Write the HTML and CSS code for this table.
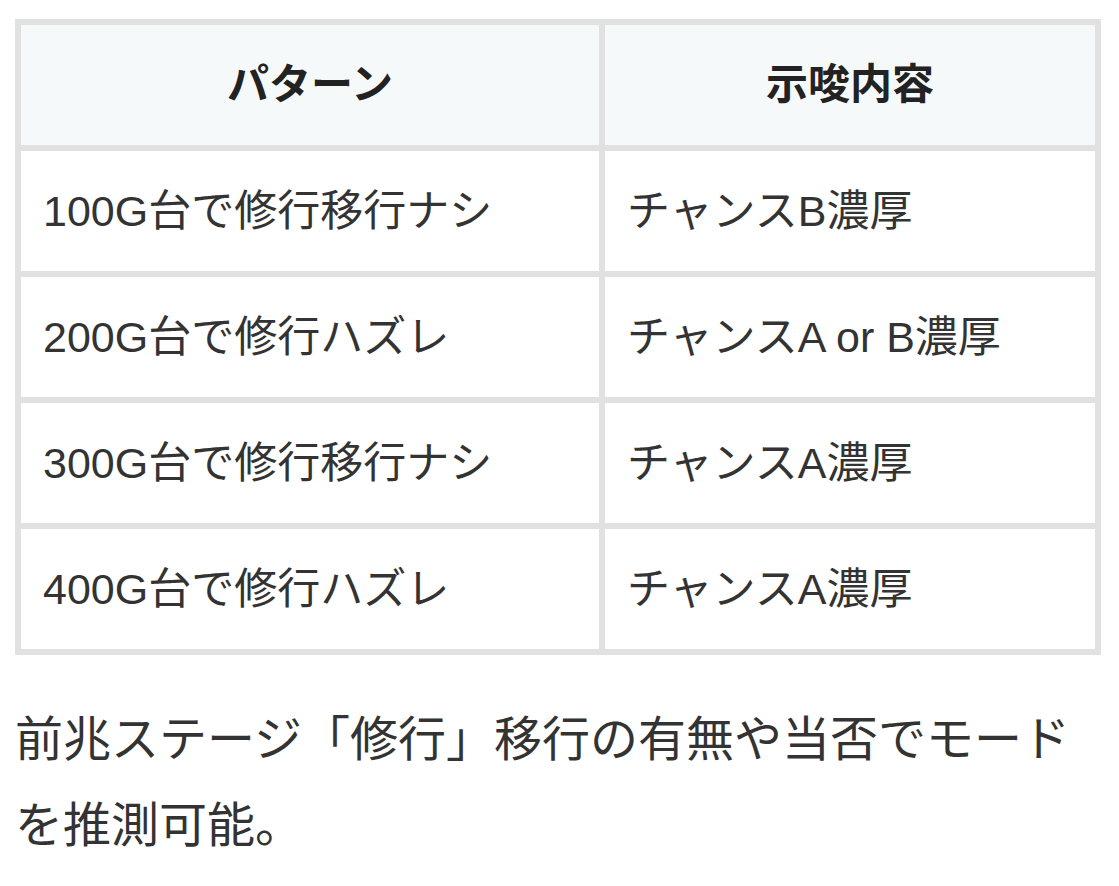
FILE: index.html
```html
<!DOCTYPE html>
<html lang="ja">
<head>
<meta charset="utf-8">
<title>修行 示唆</title>
<link rel="stylesheet" href="styles.css">
</head>
<body>
<main class="page">
  <table class="hint-table">
    <colgroup>
      <col class="col-pattern">
      <col class="col-hint">
    </colgroup>
    <thead>
      <tr>
        <th>パターン</th>
        <th>示唆内容</th>
      </tr>
    </thead>
    <tbody>
      <tr>
        <td>100G台で修行移行ナシ</td>
        <td>チャンスB濃厚</td>
      </tr>
      <tr>
        <td>200G台で修行ハズレ</td>
        <td>チャンスA or B濃厚</td>
      </tr>
      <tr>
        <td>300G台で修行移行ナシ</td>
        <td>チャンスA濃厚</td>
      </tr>
      <tr>
        <td>400G台で修行ハズレ</td>
        <td>チャンスA濃厚</td>
      </tr>
    </tbody>
  </table>
  <p class="note">前兆ステージ「修行」移行の有無や当否でモードを推測可能。</p>
</main>
</body>
</html>
```

FILE: styles.css
```css
html, body {
  margin: 0;
  padding: 0;
  background: #ffffff;
}

body {
  font-family: "Liberation Sans", "Noto Sans CJK JP", sans-serif;
  color: #333333;
}

.page {
  padding: 19px 18px 0 15px;
}

.hint-table {
  width: 1086px;
  table-layout: fixed;
  border-collapse: separate;
  border-spacing: 0;
  border-left: 6px solid #e1e1e1;
  border-top: 6px solid #e1e1e1;
}

.col-pattern {
  width: 584px;
}

.col-hint {
  width: 496px;
}

.hint-table th,
.hint-table td {
  border-right: 6px solid #e1e1e1;
  border-bottom: 6px solid #e1e1e1;
  font-size: 42px;
  line-height: 60px;
  padding: 30px 21px;
  white-space: nowrap;
}

.hint-table th {
  background: #f6f9fa;
  font-weight: bold;
  text-align: center;
  color: #222222;
}

.hint-table td {
  text-align: left;
  font-weight: normal;
  font-size: 43px;
  padding-left: 22px;
}

.note {
  margin: 42px 0 0 0;
  font-size: 48px;
  line-height: 86px;
}
```
